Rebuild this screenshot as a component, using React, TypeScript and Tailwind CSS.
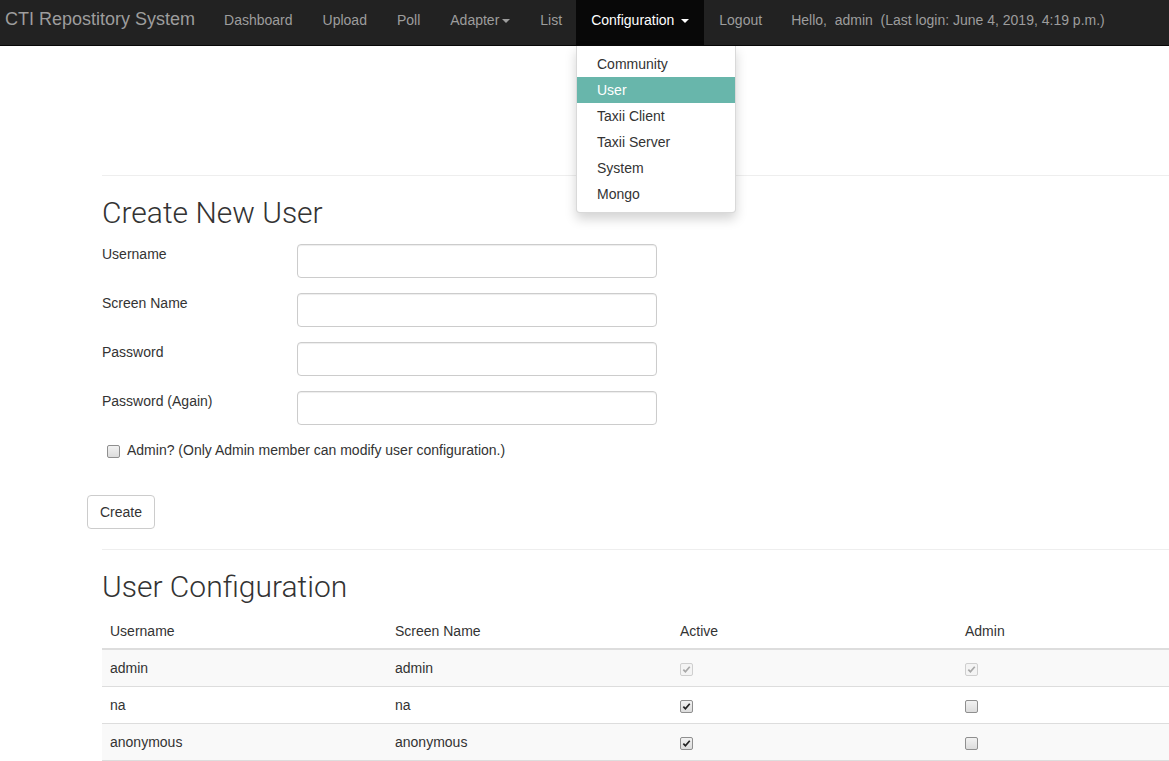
import React from "react";

const navLinks = ["Dashboard", "Upload", "Poll"];
const menuItems = ["Community", "User", "Taxii Client", "Taxii Server", "System", "Mongo"];

type UserRow = { username: string; screenName: string; active: boolean; admin: boolean; locked?: boolean };

const users: UserRow[] = [
  { username: "admin", screenName: "admin", active: true, admin: true, locked: true },
  { username: "na", screenName: "na", active: true, admin: false },
  { username: "anonymous", screenName: "anonymous", active: true, admin: false },
];

function Caret() {
  return <span className="ml-[3px] inline-block h-0 w-0 border-x-[4px] border-t-[4px] border-x-transparent border-t-current align-middle" />;
}

function Check({ checked, disabled }: { checked: boolean; disabled?: boolean }) {
  return (
    <span
      className={
        "inline-flex h-[13px] w-[13px] items-center justify-center rounded-[2px] border align-middle " +
        (disabled ? "border-[#cfcfcf] bg-[#f4f4f4]" : "border-[#8f8f8f] bg-gradient-to-b from-[#f2f2f2] to-[#dcdcdc]")
      }
    >
      {checked ? (
        <svg viewBox="0 0 10 10" className="h-[9px] w-[9px]">
          <path d="M1.5 5.2 L3.8 7.6 L8.6 2" fill="none" stroke={disabled ? "#a8a8a8" : "#222"} strokeWidth="1.9" />
        </svg>
      ) : null}
    </span>
  );
}

function Field({ label, type = "text" }: { label: string; type?: string }) {
  return (
    <div className="mb-[15px] flex">
      <label className="w-[195px] leading-[20px]">{label}</label>
      <input
        type={type}
        className="h-[34px] w-[360px] rounded-[4px] border border-[#ccc] px-3 shadow-[inset_0_1px_1px_rgba(0,0,0,0.075)] outline-none"
      />
    </div>
  );
}

export default function App() {
  return (
    <div className="relative min-h-[761px] w-full overflow-hidden bg-white font-['Liberation_Sans',Arial,sans-serif] text-[14px] text-[#333]">
      <nav className="flex h-[46px] border-b border-[#080808] bg-[#222] leading-[20px]">
        <a className="pl-[5px] pr-[14px] pt-[9px] text-[18px] text-[#9d9d9d]">CTI Repostitory System</a>
        <ul className="flex">
          {navLinks.map((l) => (
            <li key={l} className="px-[15px] pt-[10px] text-[#9d9d9d]">{l}</li>
          ))}
          <li className="px-[15px] pt-[10px] text-[#9d9d9d]">
            Adapter
            <Caret />
          </li>
          <li className="pl-[15px] pr-[14px] pt-[10px] text-[#9d9d9d]">List</li>
          <li className="relative bg-[#080808] px-[15px] pt-[10px] text-white">
            Configuration <Caret />
          </li>
          <li className="pl-[15px] pr-[14px] pt-[10px] text-[#9d9d9d]">Logout</li>
          <li className="whitespace-pre px-[15px] pt-[10px] text-[#9d9d9d]">Hello,  admin  (Last login: June 4, 2019, 4:19 p.m.)</li>
        </ul>
      </nav>

      <ul className="absolute left-[576px] top-[46px] z-10 w-[160px] rounded-b-[4px] border border-t-0 border-[rgba(0,0,0,0.15)] bg-white py-[5px] shadow-[0_6px_12px_rgba(0,0,0,0.175)]">
        {menuItems.map((m) => (
          <li
            key={m}
            className={"px-5 py-[3px] leading-[20px] " + (m === "User" ? "bg-[#68b6ab] text-white" : "text-[#333]")}
          >
            {m}
          </li>
        ))}
      </ul>

      <div className="pl-[87px]">
        <div className="w-[1160px] pt-[129px]">
          <div className="pl-[15px]">
            <hr className="border-t border-[#eee]" />
            <h2 className="mb-[15px] mt-[20px] font-['Roboto',sans-serif] text-[30px] font-light leading-[33px]">Create New User</h2>
            <Field label="Username" />
            <Field label="Screen Name" />
            <Field label="Password" type="password" />
            <Field label="Password (Again)" type="password" />
            <div className="flex items-center leading-[20px]">
              <span className="ml-[5px] mr-[7px]">
                <Check checked={false} />
              </span>
              Admin? (Only Admin member can modify user configuration.)
            </div>
          </div>
          <button className="mt-[35px] h-[34px] rounded-[4px] border border-[#ccc] bg-white px-3 leading-[20px] text-[#333]">Create</button>
          <div className="pl-[15px]">
            <hr className="mt-[20px] border-t border-[#eee]" />
            <h2 className="mb-[10px] mt-[20px] font-['Roboto',sans-serif] text-[30px] font-light leading-[33px]">User Configuration</h2>
            <table className="w-[1140px] border-collapse text-left leading-[20px]">
              <thead>
                <tr className="border-b-2 border-[#ddd]">
                  <th className="w-[285px] px-2 pb-[7px] pt-2 font-normal">Username</th>
                  <th className="w-[285px] px-2 pb-[7px] pt-2 font-normal">Screen Name</th>
                  <th className="w-[285px] px-2 pb-[7px] pt-2 font-normal">Active</th>
                  <th className="w-[285px] px-2 pb-[7px] pt-2 font-normal">Admin</th>
                </tr>
              </thead>
              <tbody>
                {users.map((u, i) => (
                  <tr key={u.username} className={"border-b border-[#ddd] " + (i % 2 === 0 ? "bg-[#f9f9f9]" : "bg-white")}>
                    <td className="h-[37px] p-2">{u.username}</td>
                    <td className="p-2">{u.screenName}</td>
                    <td className="p-2">
                      <Check checked={u.active} disabled={u.locked} />
                    </td>
                    <td className="p-2">
                      <Check checked={u.admin} disabled={u.locked} />
                    </td>
                  </tr>
                ))}
              </tbody>
            </table>
          </div>
        </div>
      </div>
    </div>
  );
}
